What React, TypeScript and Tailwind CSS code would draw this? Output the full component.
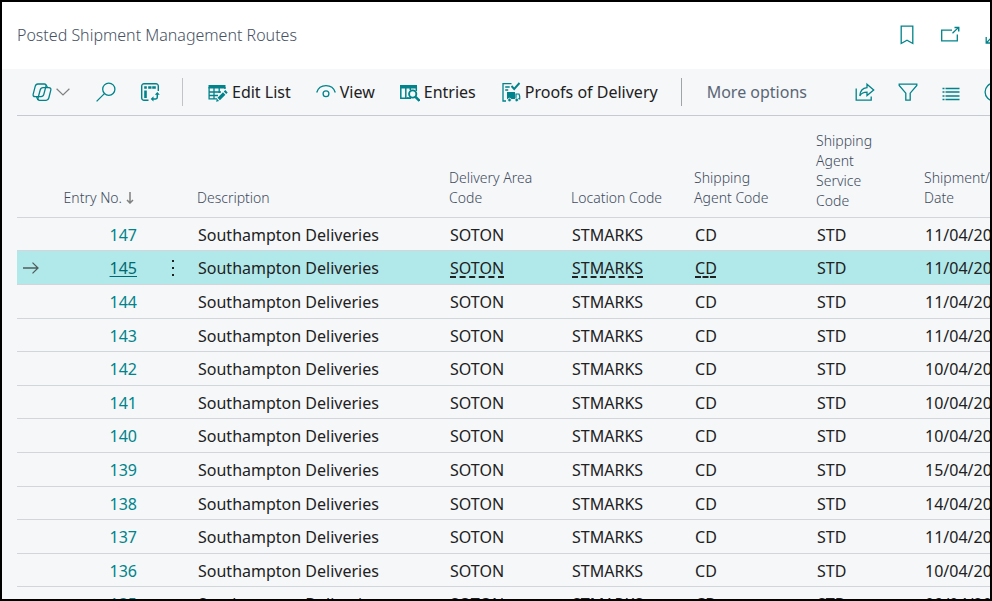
import type { ReactNode } from "react";

type Shipment = {
  entryNo: number;
  date: string;
};

const SHIPMENTS: Shipment[] = [
  { entryNo: 147, date: "11/04/2025" },
  { entryNo: 145, date: "11/04/2025" },
  { entryNo: 144, date: "11/04/2025" },
  { entryNo: 143, date: "11/04/2025" },
  { entryNo: 142, date: "10/04/2025" },
  { entryNo: 141, date: "10/04/2025" },
  { entryNo: 140, date: "10/04/2025" },
  { entryNo: 139, date: "15/04/2025" },
  { entryNo: 138, date: "14/04/2025" },
  { entryNo: 137, date: "11/04/2025" },
  { entryNo: 136, date: "10/04/2025" },
  { entryNo: 135, date: "09/04/2025" },
];

const SELECTED = 145;

const Icon = ({ children }: { children: ReactNode }) => (
  <svg
    viewBox="0 0 20 20"
    fill="none"
    stroke="currentColor"
    strokeWidth="1.3"
    aria-hidden="true"
    className="size-5 shrink-0 text-[#00838a]"
  >
    {children}
  </svg>
);

const CopilotIcon = () => (
  <Icon>
    <path d="M5.800 2h6.600c1.300 0 1.900.9 1.600 2.100l-2.200 8.300c-.4 1.500-1.300 2.300-2.800 2.300H3.100c-1.600 0-2.300-1-1.900-2.500l2-7.800C3.600 2.800 4.400 2 5.800 2z" />
    <path d="M11 5.700h5.900c1.600 0 2.300 1 1.900 2.500l-2 7.800c-.4 1.500-1.200 2.300-2.600 2.300H7.600c-1.300 0-1.900-.9-1.600-2.100l2.200-8.200c.4-1.500 1.300-2.300 2.800-2.300z" />
    <path d="M13.500 2.500c1.200.4 1.300 1.500 1.900 3.200M6.500 17.800c-1.200-.4-1.400-1.500-1.900-3.100" />
  </Icon>
);

const SearchIcon = () => (
  <Icon>
    <circle cx="12.800" cy="7.200" r="6.100" />
    <path d="M8.400 11.600.6 19.400" />
  </Icon>
);

const AnalyseIcon = () => (
  <Icon>
    <path d="M8.500 18.300H4A2.300 2.300 0 0 1 1.700 16V4A2.300 2.300 0 0 1 4 1.700h12A2.300 2.300 0 0 1 18.300 4v5" strokeWidth="1.400" />
    <path d="M4.200 4.200h2.600v2.600H4.200zM8.200 4.200h3.300v2.600H8.200zM12.200 4.200h3.600v2.600h-3.600zM4.200 8.500h2.600v7.500H4.200z" fill="currentColor" stroke="none" />
    <path d="M17.300 11.500v3.800c0 1-.6 1.600-1.600 1.600h-3" strokeWidth="1.500" />
    <path d="m14.800 12.800 2.500-2.800 2.500 2.800zM13.500 14.300 10.700 16.900l2.800 2.600z" fill="currentColor" stroke="none" />
  </Icon>
);

const EditListIcon = () => (
  <Icon>
    <path d="M.5 3h17v3.500H.5z" fill="currentColor" stroke="none" />
    <path d="M1.100 5v11.900h8M1 10h12M1 13.500h9M6 5v11.900M11.200 5v6M16.900 5v2" />
    <path d="m17.300 8 2.400 2.400-1.500 1.500-2.400-2.400zM15 10.300l2.400 2.400-5.500 5.500-2.400-2.400zM8.900 16.700l2.200 2.200-3 .8z" fill="currentColor" stroke="none" />
  </Icon>
);

const ViewIcon = () => (
  <Icon>
    <path d="M.7 10.500C2 6.500 5.500 3.700 10 3.700s8 2.800 9.300 6.800" />
    <circle cx="10" cy="11.700" r="2.900" />
  </Icon>
);

const EntriesIcon = () => (
  <Icon>
    <path d="M0 3h17v3.500H0z" fill="currentColor" stroke="none" />
    <path d="M.8 5v11.200h7M5.800 5v11M10.300 5v3M16.300 5v4" strokeWidth="1.500" />
    <circle cx="12.700" cy="12" r="3.600" strokeWidth="1.900" />
    <path d="m15.500 14.800 4 4" strokeWidth="2.600" />
    <path d="M7 15.200h4v1.800H7z" fill="currentColor" stroke="none" />
  </Icon>
);

const ProofsIcon = () => (
  <Icon>
    <path d="M10.500 1.700H2v17.300h3M4.200 5h4.500M4.200 8h3" />
    <path d="m10.500 4 2.700 3 5.300-6" strokeWidth="1.900" />
    <path d="M6 10h8v7H6z" fill="currentColor" stroke="none" />
    <path d="M15 12h3l.7 2.200v2.600H15z" strokeWidth="1.200" />
    <circle cx="8.500" cy="18" r="1.800" fill="currentColor" stroke="#f5f7f9" strokeWidth=".8" />
    <circle cx="15.700" cy="18" r="1.800" fill="currentColor" stroke="#f5f7f9" strokeWidth=".8" />
  </Icon>
);

const BookmarkIcon = () => (
  <Icon>
    <path d="M4.200 1.200h11.600v17.300L10 15.200l-5.800 3.300z" />
  </Icon>
);

const PopOutIcon = () => (
  <Icon>
    <path d="M12 5.200H1.700v10.600h15.600V9.500M12.500 8.200l6-5.800" />
    <path d="M14.500 2.400h4.200v4.200" strokeWidth="1.500" />
  </Icon>
);

const ExpandIcon = () => (
  <Icon>
    <path d="M1.200 12v6h6M1.500 17.700 8 11.200M12 8l6-6M12.500 1.500h6v6" />
  </Icon>
);

const ShareIcon = () => (
  <Icon>
    <path d="M1.200 6.500v11.700h15v-3.700" />
    <path d="M12 2.200 18.700 8 12 13.600v-3.400c-3.400 0-5.600 1-7.200 3.600.3-5 2.700-7.800 7.200-8.200z" />
  </Icon>
);

const FilterIcon = () => (
  <Icon>
    <path d="M1.200 2.200h17.600v1.300l-6.600 7.700v6.900H7.800v-6.900L1.200 3.500z" />
  </Icon>
);

const ListIcon = () => (
  <Icon>
    <path d="M4.500 6.500h14M4.500 10h14M4.500 14h14M4.500 17.500h14" />
    <path d="M1.500 6.500h2M1.500 10h2M1.500 14h2M1.500 17.500h2" />
  </Icon>
);

const InfoIcon = () => (
  <Icon>
    <circle cx="10" cy="10" r="8.900" />
    <path d="M10 9v5.500M10 5.500v1.600" />
  </Icon>
);

const IconButton = ({ label, children }: { label: string; children: ReactNode }) => (
  <button type="button" aria-label={label} className="flex shrink-0 items-center">
    {children}
  </button>
);

const Action = ({ icon, children }: { icon: ReactNode; children: ReactNode }) => (
  <button type="button" className="flex shrink-0 items-center gap-1 whitespace-nowrap text-base text-[#212121]">
    {icon}
    {children}
  </button>
);

const TitleBar = () => (
  <header className="flex h-[67px] shrink-0 items-center justify-between overflow-hidden pb-[2px] pl-[15px]">
    <h1 className="whitespace-nowrap text-base font-light text-[#465264]">Posted Shipment Management Routes</h1>
    <div className="-mr-[15px] flex items-center gap-[23px]">
      <IconButton label="Bookmark">
        <BookmarkIcon />
      </IconButton>
      <IconButton label="Open in new window">
        <PopOutIcon />
      </IconButton>
      <div className="pl-[2px]">
        <IconButton label="Expand">
          <ExpandIcon />
        </IconButton>
      </div>
    </div>
  </header>
);

const Toolbar = () => (
  <div className="ml-[15px] flex h-[47px] shrink-0 items-center justify-between overflow-hidden border-b border-[#c6cad0] pl-[15px]">
    <div className="flex items-center">
      <button type="button" aria-label="Copilot" className="flex items-center gap-1">
        <CopilotIcon />
        <svg viewBox="0 0 14 8" fill="none" stroke="#808080" strokeWidth="1.2" aria-hidden="true" className="h-2 w-[14px]">
          <path d="m.6.8 6.400 6.200L13.400.8" />
        </svg>
      </button>
      <div className="flex items-center gap-6 pl-[26px] pr-[22px]">
        <IconButton label="Search">
          <SearchIcon />
        </IconButton>
        <IconButton label="Analyse">
          <AnalyseIcon />
        </IconButton>
      </div>
      <div className="h-7 w-px bg-[#c0c4c8]" />
      <div className="flex items-center gap-[25px] pl-[25px] pr-[23px]">
        <Action icon={<EditListIcon />}>Edit List</Action>
        <Action icon={<ViewIcon />}>View</Action>
        <Action icon={<EntriesIcon />}>Entries</Action>
        <Action icon={<ProofsIcon />}>Proofs of Delivery</Action>
      </div>
      <div className="h-7 w-px bg-[#a0a4a8]" />
      <button type="button" className="whitespace-nowrap pl-[25px] text-base text-[#5a6675]">
        More options
      </button>
    </div>
    <div className="-mr-[14px] flex items-center gap-[23px]">
      <IconButton label="Share">
        <ShareIcon />
      </IconButton>
      <IconButton label="Filter">
        <FilterIcon />
      </IconButton>
      <IconButton label="List view">
        <ListIcon />
      </IconButton>
      <IconButton label="Details">
        <InfoIcon />
      </IconButton>
    </div>
  </div>
);

const HeadCell = ({ children, className = "pb-[9px]" }: { children?: ReactNode; className?: string }) => (
  <th scope="col" className={`pl-[7px] pr-3 text-left align-bottom font-light ${className}`}>
    {children}
  </th>
);

const LookupCell = ({ value, selected }: { value: string; selected: boolean }) => (
  <td className="pl-2 pt-[2px]">
    {selected ? (
      <a href="#" className="underline decoration-dashed decoration-2 underline-offset-2">
        {value}
      </a>
    ) : (
      value
    )}
  </td>
);

const ShipmentRow = ({ shipment, index }: { shipment: Shipment; index: number }) => {
  const selected = shipment.entryNo === SELECTED;
  const height = index % 5 === 0 || index % 5 === 3 ? "h-[33px]" : "h-[34px]";

  return (
    <tr className={`border-b border-[#d2d5da] ${height} ${selected ? "bg-[#b1e9eb]" : ""}`}>
      <td className="pl-[6px] pt-[2px]">
        {selected && (
          <svg viewBox="0 0 16 12" fill="none" stroke="#505c5d" strokeWidth="1.3" aria-hidden="true" className="h-3 w-4">
            <path d="M0 6h15M9.500.6 15 6l-5.500 5.400" />
          </svg>
        )}
      </td>
      <td className="pr-[18px] pt-[2px] text-right">
        <a href="#" className={selected ? "text-[#006870] underline underline-offset-2" : "text-[#00838a]"}>
          {shipment.entryNo}
        </a>
      </td>
      <td className="pt-[2px]">
        {selected && (
          <button type="button" aria-label="Show more options" className="flex w-full justify-center">
            <svg viewBox="0 0 4 18" fill="#212121" aria-hidden="true" className="h-[18px] w-1">
              <path d="M1 1h2v2H1zM1 8h2v2H1zM1 15h2v2H1z" />
            </svg>
          </button>
        )}
      </td>
      <td className="pl-2 pt-[2px]">Southampton Deliveries</td>
      <LookupCell value="SOTON" selected={selected} />
      <LookupCell value="STMARKS" selected={selected} />
      <LookupCell value="CD" selected={selected} />
      <td className="pl-2 pt-[2px]">STD</td>
      <td className="pl-2 pt-[2px]">{shipment.date}</td>
    </tr>
  );
};

const ShipmentTable = () => (
  <div className="ml-[15px] min-h-0 flex-1 overflow-hidden">
    <table className="w-full min-w-[1020px] table-fixed border-collapse whitespace-nowrap text-base leading-6 text-[#212121]">
      <colgroup>
        <col className="w-10" />
        <col className="w-[98px]" />
        <col className="w-[35px]" />
        <col className="w-[252px]" />
        <col className="w-[122px]" />
        <col className="w-[123px]" />
        <col className="w-[122px]" />
        <col className="w-[108px]" />
        <col />
      </colgroup>
      <thead>
        <tr className="h-[101px] border-b border-[#d2d5da] text-sm leading-5 text-[#3f4b5c]">
          <th scope="col" colSpan={2} className="pb-[9px] pr-[21px] text-right align-bottom font-light">
            <span className="inline-flex items-center gap-1">
              Entry No.
              <svg viewBox="0 0 8 12" fill="none" stroke="#808080" strokeWidth="1.5" aria-hidden="true" className="h-3 w-2">
                <path d="M4 0v11M1 8l3 3 3-3" />
              </svg>
            </span>
          </th>
          <td />
          <HeadCell>Description</HeadCell>
          <HeadCell>
            Delivery Area
            <br />
            Code
          </HeadCell>
          <HeadCell>Location Code</HeadCell>
          <HeadCell>
            Shipping
            <br />
            Agent Code
          </HeadCell>
          <HeadCell className="pb-[6px]">
            Shipping
            <br />
            Agent
            <br />
            Service
            <br />
            Code
          </HeadCell>
          <HeadCell>
            Shipment/
            <br />
            Date
          </HeadCell>
        </tr>
      </thead>
      <tbody>
        {SHIPMENTS.map((shipment, index) => (
          <ShipmentRow key={shipment.entryNo} shipment={shipment} index={index} />
        ))}
      </tbody>
    </table>
  </div>
);

const App = () => (
  <div className="flex h-screen flex-col overflow-hidden border-2 border-black bg-white font-['Noto_Sans',sans-serif]">
    <TitleBar />
    <main className="flex min-h-0 flex-1 flex-col bg-[#f5f7f9]">
      <Toolbar />
      <ShipmentTable />
    </main>
  </div>
);

export default App;
